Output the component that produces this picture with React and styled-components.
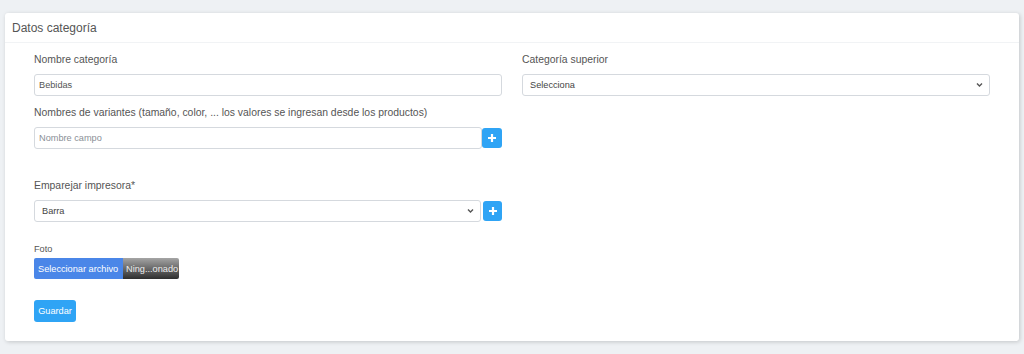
import React from "react";
import styled, { createGlobalStyle } from "styled-components";

const Global = createGlobalStyle`
  html, body { margin: 0; padding: 0; background: #eef1f4; }
  body { font-family: "Liberation Sans", Arial, sans-serif; }
  * { box-sizing: border-box; }
`;

const Page = styled.div`
  padding: 13px 5px 12px 5px;
  height: 354px;
`;

const Card = styled.div`
  background: #fff;
  border-radius: 3px;
  box-shadow: 1px 1px 4px rgba(0, 0, 0, 0.18);
  height: 328px;
`;

const CardHeader = styled.div`
  height: 30px;
  padding: 0 7px;
  display: flex;
  align-items: center;
  font-size: 12px;
  color: #555;
  border-bottom: 1px solid #f1f3f5;
`;

const Body = styled.div`
  padding: 10px 29px 0 29px;
`;

const Grid = styled.div`
  display: grid;
  grid-template-columns: 468px 468px;
  column-gap: 20px;
`;

const Field = styled.div`
  display: flex;
  flex-direction: column;
  margin-top: ${(p) => p.$mt || 0}px;
`;

const Label = styled.label`
  font-size: ${(p) => p.$size || 10.4}px;
  color: #555;
  line-height: 14px;
  margin-bottom: ${(p) => p.$mb || 7}px;
`;

const Input = styled.input`
  height: 22px;
  width: 100%;
  border: 1px solid #d5d9de;
  border-radius: 3px;
  padding: 0 4px;
  font-family: "Liberation Sans", Arial, sans-serif;
  font-size: 9.2px;
  color: #555;
  outline: none;
  &::placeholder { color: #8a8f96; }
`;

const SelectBox = styled.div`
  position: relative;
  height: 22px;
  flex: 1;
  border: 1px solid #d5d9de;
  border-radius: 3px;
  padding: 0 7px;
  display: flex;
  align-items: center;
  font-size: 9.2px;
  color: #444;
`;

const Chevron = styled.svg`
  position: absolute;
  right: 6px;
  top: 7px;
`;

const Row = styled.div`
  display: flex;
  align-items: center;
  gap: ${(p) => p.$gap || 0}px;
`;

const PlusButton = styled.button`
  width: ${(p) => p.$w || 20}px;
  height: 20px;
  flex: none;
  border: none;
  border-radius: 3px;
  background: #2fa4f5;
  display: flex;
  align-items: center;
  justify-content: center;
  padding: 0;
`;

const FileBox = styled.div`
  display: flex;
  height: 21px;
  width: 145px;
  border-radius: 2px;
  overflow: hidden;
  font-size: 9.2px;
`;

const FileBtn = styled.span`
  background: #4a86e8;
  color: #fff;
  width: 89px;
  flex: none;
  padding-left: 4px;
  display: flex;
  align-items: center;
  white-space: nowrap;
`;

const FileName = styled.span`
  flex: 1;
  background: linear-gradient(#a5a5a5, #2e2e2e);
  color: #eee;
  padding-left: 3px;
  display: flex;
  align-items: center;
  white-space: nowrap;
  overflow: hidden;
`;

const SaveButton = styled.button`
  align-self: flex-start;
  margin-top: 21px;
  height: 22px;
  width: 42px;
  padding: 0;
  border: none;
  border-radius: 3px;
  background: #2fa4f5;
  color: #fff;
  font-family: "Liberation Sans", Arial, sans-serif;
  font-size: 9.2px;
`;

const Plus = () => (
  <svg width="10" height="10" viewBox="0 0 10 10">
    <path d="M5 1v8M1 5h8" stroke="#fff" strokeWidth="2.2" />
  </svg>
);

const Down = () => (
  <Chevron width="7" height="6" viewBox="0 0 7 6">
    <path d="M1 1.5l2.5 2.5 2.5-2.5" stroke="#555" strokeWidth="1.4" fill="none" />
  </Chevron>
);

export default function App() {
  return (
    <>
      <Global />
      <Page>
        <Card>
          <CardHeader>Datos categoría</CardHeader>
          <Body>
            <Grid>
              <Field>
                <Label>Nombre categoría</Label>
                <Input defaultValue="Bebidas" />
              </Field>
              <Field>
                <Label>Categoría superior</Label>
                <Row>
                  <SelectBox>
                    Selecciona
                    <Down />
                  </SelectBox>
                </Row>
              </Field>
              <Field $mt={10}>
                <Label>Nombres de variantes (tamaño, color, ... los valores se ingresan desde los productos)</Label>
                <Row>
                  <Input placeholder="Nombre campo" />
                  <PlusButton><Plus /></PlusButton>
                </Row>
              </Field>
              <div />
              <Field $mt={30}>
                <Label>Emparejar impresora*</Label>
                <Row $gap={2}>
                  <SelectBox>
                    Barra
                    <Down />
                  </SelectBox>
                  <PlusButton $w={19}><Plus /></PlusButton>
                </Row>
              </Field>
              <div />
              <Field $mt={20}>
                <Label $size={9.2} $mb={2}>Foto</Label>
                <FileBox>
                  <FileBtn>Seleccionar archivo</FileBtn>
                  <FileName>Ning...onado</FileName>
                </FileBox>
                <SaveButton>Guardar</SaveButton>
              </Field>
            </Grid>
          </Body>
        </Card>
      </Page>
    </>
  );
}
